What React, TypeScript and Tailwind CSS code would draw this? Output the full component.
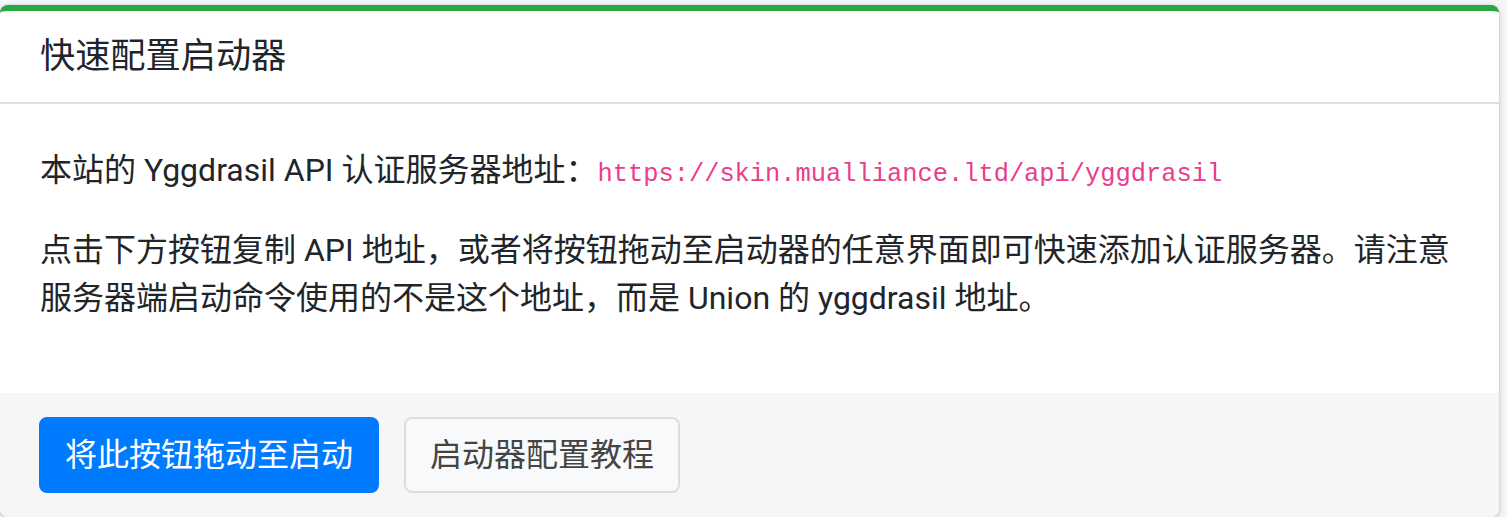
export default function App() {
  const sans = "font-['Roboto','Noto_Sans_CJK_SC',sans-serif]";
  return (
    <div className={`min-h-[517px] bg-[#f4f6f9] pt-[5px] pr-[8px] ${sans}`}>
      <div className="overflow-hidden rounded-[8px] border-t-[6px] border-[#28a745] bg-white text-[#212529] shadow-[0_0_2px_rgba(0,0,0,0.125),0_2px_6px_rgba(0,0,0,0.2)]">
        {/* header */}
        <div className="border-b-2 border-[rgba(0,0,0,0.125)] px-[40px] pt-[24px] pb-[25px]">
          <h3 className="text-[35.2px] leading-[42px] font-normal">快速配置启动器</h3>
        </div>

        {/* body */}
        <div className="px-[40px] pt-[42px] pb-[39px] text-[32px] leading-[48px]">
          <p className="mb-[32px] h-[48px]">
            本站的 Yggdrasil API 认证服务器地址：
            <code className="font-['Liberation_Mono',monospace] text-[25.4px] leading-none text-[#e83e8c]">
              https://skin.mualliance.ltd/api/yggdrasil
            </code>
          </p>
          <p className="mb-[32px] h-[96px]">
            点击下方按钮复制 API 地址，或者将按钮拖动至启动器的任意界面即可快速添加认证服务器。请注意服务器端启动命令使用的不是这个地址，而是 Union 的 yggdrasil 地址。
          </p>
        </div>

        {/* footer */}
        <div className="flex gap-[25px] bg-[#f6f6f6] px-[39px] py-[24px]">
          <button className="rounded-[8px] border-2 border-[#007bff] bg-[#007bff] px-[24px] py-[12px] text-[32px] leading-[48px] text-white">
            将此按钮拖动至启动
          </button>
          <button className="rounded-[8px] border-2 border-[#dddddd] bg-[#f8f9fa] px-[24px] py-[12px] text-[32px] leading-[48px] text-[#444444]">
            启动器配置教程
          </button>
        </div>
      </div>
    </div>
  );
}
